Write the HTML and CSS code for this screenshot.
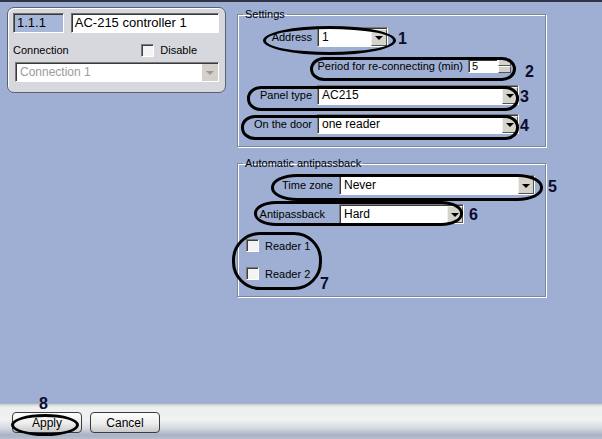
FILE: index.html
```html
<!DOCTYPE html>
<html lang="en">
<head>
    <meta charset="UTF-8">
    <title>AC-215 controller</title>
    <link rel="stylesheet" href="styles.css">
</head>
<body>

    <div class="main">
        <div class="card">
            <div class="card-row">
                <div class="field field-id">1.1.1</div>
                <div class="field field-name">AC-215 controller 1</div>
            </div>
            <div class="card-row conn-row">
                <span>Connection</span>
                <label class="check"><span class="box"></span>Disable</label>
            </div>
            <div class="combo combo-disabled">
                <span class="combo-text">Connection 1</span>
                <span class="combo-btn"><i class="tri"></i></span>
            </div>
        </div>

        <div class="groups">
            <fieldset class="group group-settings">
                <legend>Settings</legend>
                <div class="row">
                    <span class="lbl">Address</span>
                    <div class="combo combo-address">
                        <span class="combo-text">1</span>
                        <span class="combo-btn"><i class="tri"></i></span>
                    </div>
                </div>
                <div class="row row-period">
                    <span>Period for re-connecting (min)</span>
                    <div class="spin">
                        <span class="spin-field">5</span>
                        <span class="spin-btn"><i></i><i></i></span>
                    </div>
                </div>
                <div class="row">
                    <span class="lbl">Panel type</span>
                    <div class="combo combo-wide">
                        <span class="combo-text">AC215</span>
                        <span class="combo-btn"><i class="tri"></i></span>
                    </div>
                </div>
                <div class="row">
                    <span class="lbl">On the door</span>
                    <div class="combo combo-wide">
                        <span class="combo-text">one reader</span>
                        <span class="combo-btn"><i class="tri"></i></span>
                    </div>
                </div>
            </fieldset>

            <fieldset class="group group-apb">
                <legend>Automatic antipassback</legend>
                <div class="row">
                    <span class="lbl lbl-apb">Time zone</span>
                    <div class="combo combo-zone">
                        <span class="combo-text">Never</span>
                        <span class="combo-btn"><i class="tri"></i></span>
                    </div>
                </div>
                <div class="row">
                    <span class="lbl lbl-apb lbl-hard">Antipassback</span>
                    <div class="combo combo-hard">
                        <span class="combo-text">Hard</span>
                        <span class="combo-btn"><i class="tri"></i></span>
                    </div>
                </div>
                <div class="readers">
                    <label class="check"><span class="box"></span>Reader 1</label>
                    <label class="check"><span class="box"></span>Reader 2</label>
                </div>
            </fieldset>
        </div>
    </div>

    <div class="bottom">
        <button class="btn">Apply</button>
        <button class="btn">Cancel</button>
    </div>

    <!-- callouts drawn over the screenshot -->
    <div class="oval oval-1"></div>
    <div class="oval oval-2"></div>
    <div class="oval oval-3"></div>
    <div class="oval oval-4"></div>
    <div class="oval oval-5"></div>
    <div class="oval oval-6"></div>
    <div class="oval oval-7"></div>
    <div class="oval oval-8"></div>
    <span class="num num-1">1</span>
    <span class="num num-2">2</span>
    <span class="num num-3">3</span>
    <span class="num num-4">4</span>
    <span class="num num-5">5</span>
    <span class="num num-6">6</span>
    <span class="num num-7">7</span>
    <span class="num num-8">8</span>

</body>
</html>
```

FILE: styles.css
```css
html, body {
    margin: 0;
    padding: 0;
}
body {
    position: relative;
    width: 602px;
    height: 439px;
    box-sizing: border-box;
    border-top: 2px solid #2f3546;
    background-color: #9eafd3;
    font-family: "Liberation Sans", Arial, sans-serif;
    font-size: 11px;
    color: #000;
    display: flex;
    flex-direction: column;
    overflow: hidden;
}
.main {
    flex: 1;
    display: flex;
    align-items: flex-start;
    padding: 5px 0 0 7px;
}

/* left card */
.card {
    width: 219px;
    height: 86px;
    box-sizing: border-box;
    background-color: #d7d8de;
    border: 1px solid #5a6072;
    border-radius: 7px;
    box-shadow: inset 1px 1px 0 #fff;
    padding: 5px 6px 0 5px;
}
.card-row {
    display: flex;
    align-items: center;
    gap: 7px;
}
.field {
    height: 20px;
    box-sizing: border-box;
    border: 1px solid;
    border-color: #6f6f6f #fff #fff #6f6f6f;
    box-shadow: inset 1px 1px 0 #3a3a3a;
    line-height: 18px;
    padding-left: 3px;
    font-size: 13px;
}
.field-id {
    width: 51px;
    background-color: #a7b7d9;
}
.field-name {
    width: 149px;
    background-color: #fff;
}
.conn-row {
    margin-top: 10px;
    height: 14px;
    justify-content: space-between;
    padding-right: 22px;
}
.check {
    display: flex;
    align-items: center;
    gap: 6px;
}
.box {
    width: 13px;
    height: 13px;
    box-sizing: border-box;
    border: 1px solid;
    border-color: #7a7a7a #fff #fff #7a7a7a;
    box-shadow: inset 1px 1px 0 #404040;
    background-color: #f4f4f4;
}
.combo-disabled {
    margin: 5px 0 0 2px;
    width: 204px;
    height: 19px;
    background-color: #fff;
    border: 1px solid #a9a9a9;
    box-shadow: none;
    color: #9c9c9c;
}
.combo-disabled .combo-btn {
    background-color: #d3d1ca;
    border: none;
    width: 16px;
}
.combo-disabled .tri {
    border-top-color: #9a9a9a;
}

/* right group boxes */
.groups {
    margin-left: 11px;
    display: flex;
    flex-direction: column;
    gap: 9px;
}
.group {
    margin: 0;
    width: 309px;
    box-sizing: border-box;
    border: 1px solid #7d879c;
    box-shadow: inset 1px 1px 0 #fff, 1px 1px 0 #fff;
    padding: 0;
}
.group legend {
    margin-left: 5px;
    padding: 0 2px;
    line-height: 14px;
}
.group-settings {
    height: 140px;
    padding-top: 6px;
}
.group-apb {
    height: 141px;
    padding-top: 5px;
}
.row {
    display: flex;
    align-items: center;
    height: 20px;
    margin-bottom: 9px;
}
.lbl {
    width: 74px;
    text-align: right;
    margin-right: 5px;
}
.lbl-apb {
    width: 95px;
    margin-right: 6px;
}
.lbl-hard {
    width: 87px;
    margin-right: 14px;
}
.row-period {
    margin-top: 1px;
    justify-content: flex-end;
    padding-right: 34px;
}
.spin {
    display: flex;
    margin-left: 5px;
}
.spin-field {
    width: 30px;
    height: 14px;
    box-sizing: border-box;
    background-color: #fff;
    border: 1px solid;
    border-color: #6f6f6f #fff #fff #6f6f6f;
    box-shadow: inset 1px 1px 0 #3a3a3a;
    font-size: 11px;
    line-height: 13px;
    padding-left: 3px;
}
.spin-btn {
    width: 13px;
    height: 14px;
    display: flex;
    flex-direction: column;
}
.spin-btn i {
    flex: 1;
    background-color: #d4d2cc;
    border: 1px solid;
    border-color: #fff #555 #555 #fff;
}

.combo {
    display: flex;
    align-items: stretch;
    height: 20px;
    box-sizing: border-box;
    background-color: #fff;
    border: 1px solid;
    border-color: #7a7a7a #fff #fff #7a7a7a;
    box-shadow: inset 1px 1px 0 #3a3a3a;
    padding: 1px 0 0 1px;
}
.combo-text {
    flex: 1;
    padding-left: 3px;
    line-height: 17px;
    font-size: 12px;
}
.combo-btn {
    width: 16px;
    box-sizing: border-box;
    background-color: #d6d3cb;
    border: 1px solid;
    border-color: #f0f0f0 #555 #555 #f0f0f0;
    display: flex;
    align-items: center;
    justify-content: center;
}
.tri {
    width: 0;
    height: 0;
    border-left: 4px solid transparent;
    border-right: 4px solid transparent;
    border-top: 4px solid #000;
}
.combo-address {
    width: 71px;
}
.combo-wide {
    width: 202px;
}
.combo-zone {
    width: 196px;
}
.combo-hard {
    width: 125px;
}
.readers {
    display: flex;
    flex-direction: column;
    gap: 15px;
    padding: 6px 0 0 8px;
}
.readers .check {
    height: 13px;
}

/* bottom bar */
.bottom {
    height: 36px;
    display: flex;
    align-items: flex-start;
    gap: 8px;
    padding: 9px 0 0 12px;
    box-sizing: border-box;
    background: linear-gradient(#8e9cb8 0, #c6ccd6 1px, #eef0f0 4px, #f0f1f1 17px, #d6dae2 25px, #a9b2c6 32px, #b6bdcd 36px);
}
.btn {
    width: 70px;
    height: 21px;
    border: 1px solid #3c3c3c;
    border-radius: 4px;
    background: linear-gradient(#fdfdfd, #ededed 55%, #c9c9c9);
    font-family: "Liberation Sans", Arial, sans-serif;
    font-size: 12px;
    color: #000;
    padding: 0;
}

/* annotations */
.oval {
    position: absolute;
    box-sizing: border-box;
    border: 3px solid #000;
    border-radius: 50%;
}
.oval-1 { left: 263px; top: 24px; width: 133px; height: 29px; }
.oval-2 { left: 310px; top: 55px; width: 206px; height: 24px; border-radius: 14px / 12px; }
.oval-3 { left: 247px; top: 84px; width: 272px; height: 25px; border-radius: 14px / 12px; }
.oval-4 { left: 241px; top: 113px; width: 278px; height: 25px; border-radius: 14px / 12px; }
.oval-5 { left: 271px; top: 172px; width: 272px; height: 27px; border-radius: 26px / 13px; }
.oval-6 { left: 254px; top: 199px; width: 209px; height: 25px; border-radius: 22px / 12px; }
.oval-7 { left: 232px; top: 230px; width: 90px; height: 58px; border-radius: 28px; }
.oval-8 { left: 11px; top: 412px; width: 68px; height: 22px; }
.num {
    position: absolute;
    font-family: "Liberation Sans", Arial, sans-serif;
    font-weight: bold;
    font-size: 16px;
    line-height: 16px;
    color: #0c0c2c;
}
.num-1 { left: 398px; top: 29px; }
.num-2 { left: 525px; top: 62px; }
.num-3 { left: 520px; top: 87px; }
.num-4 { left: 520px; top: 116px; }
.num-5 { left: 548px; top: 177px; }
.num-6 { left: 469px; top: 205px; }
.num-7 { left: 320px; top: 274px; }
.num-8 { left: 39px; top: 394px; }
```
